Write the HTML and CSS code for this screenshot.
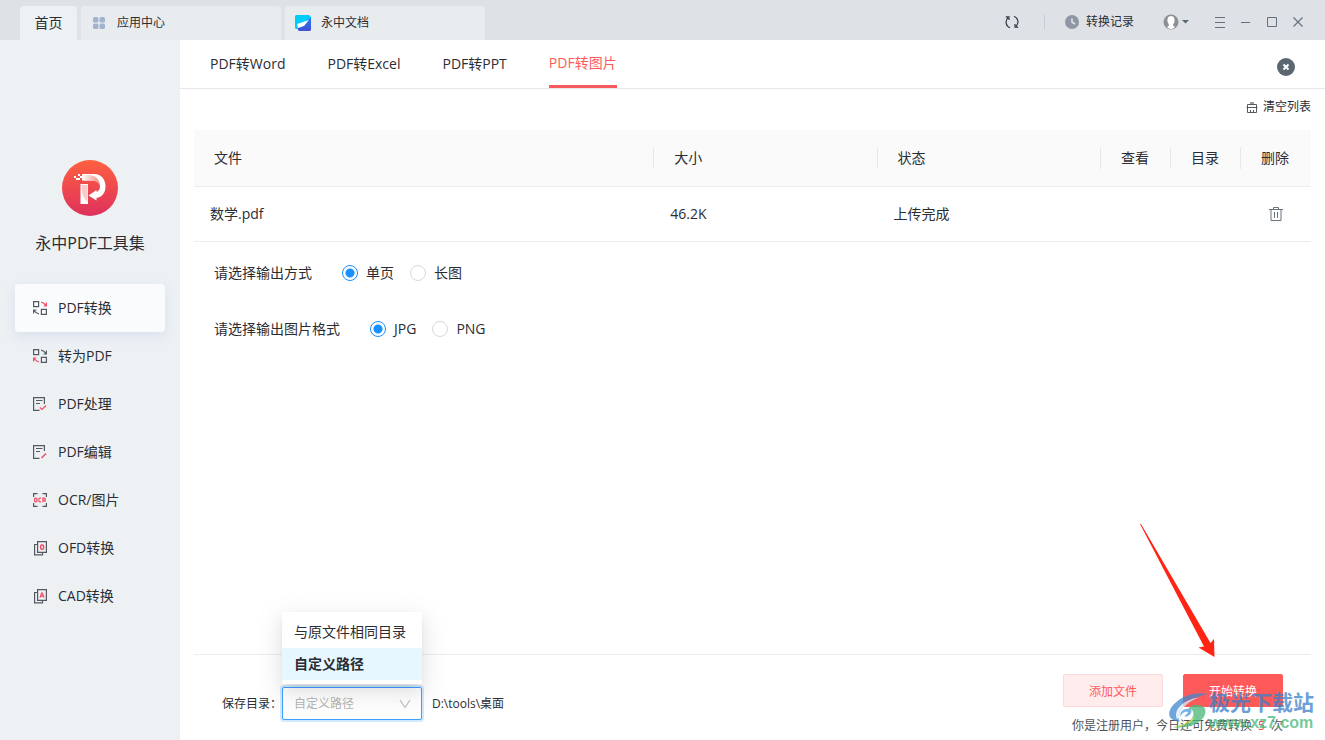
FILE: index.html
```html
<!DOCTYPE html>
<html lang="zh-CN">
<head>
<meta charset="utf-8">
<title>永中PDF工具集</title>
<link rel="stylesheet" href="styles.css">
</head>
<body>
<div class="app">
  <header class="topbar">
    <nav class="tabs">
      <button class="tab tab-home" type="button">首页</button>
      <button class="tab" type="button">
        <svg class="tab-icon" width="16" height="16" viewBox="0 0 16 16" fill="#a3b3ce"><rect x="2" y="2" width="5.500" height="5.500" rx="1.500"/><rect x="8.500" y="2" width="5.500" height="5.500" rx="1.500"/><rect x="2" y="8.500" width="5.500" height="5.500" rx="1.500"/><rect x="8.500" y="8.500" width="5.500" height="5.500" rx="1.500"/></svg>
        应用中心
      </button>
      <button class="tab" type="button">
        <svg class="tab-icon" width="16" height="16" viewBox="0 0 16 16"><defs><linearGradient id="doc" x1="0" y1="0" x2="0" y2="1"><stop offset="0" stop-color="#2878f0"/><stop offset="1" stop-color="#4050d8"/></linearGradient></defs><path d="M1 0H14L16 2V9H3V14H1L0 13V1Z" fill="#00ccfc"/><path d="M3 13L14 4L16 3V15L15 16H4L3 15Z" fill="url(#doc)"/><path d="M2 9L14 5L9 11L3 13Z" fill="#fff"/></svg>
        永中文档
      </button>
    </nav>
    <div class="tools">
      <button class="icon-btn" type="button" aria-label="刷新"><svg width="14" height="14" viewBox="0 0 14 14" fill="none" stroke="#343a42" stroke-width="1.200"><path d="M5 12.800A6 6 0 0 1 3 2.800M.800 1.800H4V5M9 1.200A6 6 0 0 1 11 11.200M13.200 12.200H10V9"/></svg></button>
      <span class="divider"></span>
      <button class="history" type="button"><svg width="14" height="14" viewBox="0 0 14 14"><circle cx="7" cy="7" r="7" fill="#8f97a4"/><path d="M7 3.500V7.200L10 9" fill="none" stroke="#e6e9ed" stroke-width="1.500"/></svg>转换记录</button>
      <button class="account" type="button" aria-label="账户"><svg width="26" height="16" viewBox="0 0 26 16"><circle cx="8" cy="8" r="7.500" fill="#8d9094"/><path d="M8 2C4.800 2 4.200 5 4.500 7.500C4.800 9.200 6 10 6 11.500L4 13C6 15.500 10 15.500 12 13L10 11.500C10 10 11.200 9.200 11.500 7.500C11.800 5 11.200 2 8 2Z" fill="#fff"/><path d="M19 6H26L22.500 9.500Z" fill="#5a6874"/></svg></button>
      <div class="window-controls">
        <button class="icon-btn" type="button" aria-label="菜单"><svg width="12" height="12" viewBox="0 0 12 12" stroke="#66717e"><path d="M1 1.500H11M1 6.500H11M1 11.500H11"/></svg></button>
        <button class="icon-btn" type="button" aria-label="最小化"><svg width="12" height="12" viewBox="0 0 12 12" stroke="#66717e"><path d="M1 6.500H10"/></svg></button>
        <button class="icon-btn" type="button" aria-label="最大化"><svg width="12" height="12" viewBox="0 0 12 12" fill="none" stroke="#66717e"><path d="M1.500 1.500H10.500V10.500H1.500Z"/></svg></button>
        <button class="icon-btn" type="button" aria-label="关闭"><svg width="12" height="12" viewBox="0 0 12 12" stroke="#66717e" stroke-width="1.200"><path d="M1.500 1.500L10.500 10.500M10.500 1.500L1.500 10.500"/></svg></button>
      </div>
    </div>
  </header>

  <div class="body">
    <aside class="sidebar">
      <svg class="brand-logo" width="56" height="56" viewBox="0 0 56 56"><defs><linearGradient id="lg" x1="0" y1="0" x2="0" y2="1"><stop offset="0" stop-color="#ff6040"/><stop offset="1" stop-color="#de315c"/></linearGradient><linearGradient id="ribbon" x1="0" y1="0" x2="1" y2="0"><stop offset="0" stop-color="#fff"/><stop offset="1" stop-color="#f58a7c"/></linearGradient></defs><circle cx="28" cy="28" r="28" fill="url(#lg)"/><path d="M20 14H32C40 14 43.500 20 43.500 26.500C43.500 33 40 37 34.500 38V40.500L26.500 35.500L34.500 30V32C37 31 38 29 38 26.500C38 23 35 20.500 31 20.500H20Z" fill="#fff"/><path d="M20 15H27C33 15.500 38 19 38 26C36 22 33 20.500 30 20.500H22Z" fill="url(#ribbon)"/><path d="M18.500 24H26V44H18.500Z" fill="#fff"/><path d="M19.500 25V30C20 35 22 39 25.500 42V25Z" fill="#f3a3a0" opacity=".55"/><path d="M12 16H14V18H12ZM14 18H16V20H14ZM16 14H18V16H16ZM18 16H20V18H18ZM16 18H18V20H16ZM20 14H22V16H20ZM20 18H22V20H20Z" fill="#fff"/></svg>
      <h1 class="brand-name">永中PDF工具集</h1>
      <nav class="menu">
        <a class="menu-item is-active" href="#"><svg width="16" height="16" viewBox="0 0 16 16" fill="none" stroke="#555a62" stroke-width="1.200"><path d="M1.600 1.600H6.600V6.600H1.600ZM9.400 9.400H14.400V14.400H9.400Z"/><path d="M9 2C11 2.500 12.500 3.500 14 5.500M14.400 2.500V6H11.500" stroke="#f24b62"/><path d="M7 14C5 13.500 3.500 12.500 2 10.500M1.600 13.500V10H4.500"/></svg>PDF转换</a>
        <a class="menu-item" href="#"><svg width="16" height="16" viewBox="0 0 16 16" fill="none" stroke="#555a62" stroke-width="1.200"><path d="M1.600 1.600H6.600V6.600H1.600ZM9.400 9.400H14.400V14.400H9.400Z"/><path d="M9 2C11 2.500 12.500 3.500 14 5.500M14.400 2.500V6H11.500"/><path d="M7 14C5 13.500 3.500 12.500 2 10.500M1.600 13.500V10H4.500" stroke="#f24b62"/></svg>转为PDF</a>
        <a class="menu-item" href="#"><svg width="16" height="16" viewBox="0 0 16 16" fill="none" stroke="#555a62" stroke-width="1.200"><path d="M7.500 14.400H1.600V1.600H12.400V8M4 4.500H10.500M4 7.500H8"/><path d="M7.800 11.500L10 13.500L14 9.500" stroke="#f24b62"/></svg>PDF处理</a>
        <a class="menu-item" href="#"><svg width="16" height="16" viewBox="0 0 16 16" fill="none" stroke="#555a62" stroke-width="1.200"><path d="M7.500 14.400H1.600V1.600H12.400V7M4 4.500H10.500M4 7.500H8"/><path d="M9.500 14L14 9.500" stroke="#f24b62" stroke-width="1.500"/></svg>PDF编辑</a>
        <a class="menu-item" href="#"><svg width="16" height="16" viewBox="0 0 16 16" fill="none" stroke="#555a62" stroke-width="1.200"><path d="M1.600 5V1.600H5.500M10.500 1.600H14.400V5M1.600 11V14.400H5.500M10.500 14.400H14.400V11"/><g stroke="#f24b62"><rect x="2.600" y="6.200" width="2.400" height="3.600" rx="1"/><path d="M9 6.200H7.800Q6.800 6.200 6.800 8T7.800 9.800H9M10.900 10.200V6.200H12.400Q13.500 6.200 13.300 7.400T12.300 8.400H11M12.300 8.400L13.500 10"/></g></svg>OCR/图片</a>
        <a class="menu-item" href="#"><svg width="16" height="16" viewBox="0 0 16 16" fill="none" stroke="#555a62" stroke-width="1.200"><path d="M5.600 1.600H14.400V12.400H5.600ZM5 4.500H2.600V14.900H10.500V13"/><rect x="8.600" y="5" width="3" height="4.200" rx="1.200" stroke="#f24b62" stroke-width="1.400"/></svg>OFD转换</a>
        <a class="menu-item" href="#"><svg width="16" height="16" viewBox="0 0 16 16" fill="none" stroke="#555a62" stroke-width="1.200"><path d="M5.600 1.600H14.400V12.400H5.600ZM5 4.500H2.600V14.900H10.500V13"/><path d="M8 9.500L9.600 5H10.400L12 9.500M8.600 8.200H11.400" stroke="#f24b62"/></svg>CAD转换</a>
      </nav>
    </aside>

    <main class="main">
      <div class="mode-bar">
        <nav class="modes">
          <a class="mode" href="#">PDF转Word</a>
          <a class="mode" href="#">PDF转Excel</a>
          <a class="mode" href="#">PDF转PPT</a>
          <a class="mode is-active" href="#">PDF转图片</a>
        </nav>
        <button class="icon-btn" type="button" aria-label="关闭"><svg width="18" height="18" viewBox="0 0 18 18"><circle cx="9" cy="9" r="9" fill="#5b6670"/><path d="M6.500 6.500L11.500 11.500M11.500 6.500L6.500 11.500" stroke="#fff" stroke-width="2"/></svg></button>
      </div>

      <div class="content">
        <div class="list-actions">
          <button class="clear" type="button"><svg width="12" height="12" viewBox="0 0 12 12" fill="none" stroke="#555a62"><path d="M4.500 3.500V1.500H7.500V3.500" fill="#999" stroke="#999"/><path d="M1.500 6.500V3.500H10.500V6.500M.5 6.500H11.500M1.500 6.500V11.500H10.500V6.500M4.500 11.500V9M7.500 11.500V9"/></svg>清空列表</button>
        </div>
        <table class="files">
          <colgroup><col><col class="col-wide"><col class="col-wide"><col class="col-action"><col class="col-action"><col class="col-action"></colgroup>
          <thead>
            <tr><th>文件</th><th>大小</th><th>状态</th><th>查看</th><th>目录</th><th>删除</th></tr>
          </thead>
          <tbody>
            <tr><td>数学.pdf</td><td>46.2K</td><td>上传完成</td><td></td><td></td><td class="cell-delete"><button class="icon-btn" type="button" aria-label="删除"><svg width="16" height="16" viewBox="0 0 16 16" fill="none" stroke="#69737d"><path d="M1 3.500H15M5.500 3.500V1.500H10.500V3.500M3 3.500V14.500H13V3.500M6.500 6V12M9.500 6V12"/></svg></button></td></tr>
          </tbody>
        </table>

        <div class="options">
          <div class="option-row" role="radiogroup" aria-labelledby="layout-label">
            <span class="option-label" id="layout-label">请选择输出方式</span>
            <label class="radio"><input type="radio" name="layout" checked>单页</label>
            <label class="radio"><input type="radio" name="layout">长图</label>
          </div>
          <div class="option-row" role="radiogroup" aria-labelledby="format-label">
            <span class="option-label" id="format-label">请选择输出图片格式</span>
            <label class="radio"><input type="radio" name="format" checked>JPG</label>
            <label class="radio"><input type="radio" name="format">PNG</label>
          </div>
        </div>

        <footer class="footer">
          <div class="save">
            <label for="save-dir">保存目录：</label>
            <div class="select-wrap">
              <select class="select" id="save-dir"><option>自定义路径</option><option>与原文件相同目录</option></select>
              <svg class="select-arrow" width="12" height="12" viewBox="0 0 12 12" fill="none" stroke="#bfbfbf" stroke-width="1.200"><path d="M1 2L6 9.500L11 2"/></svg>
              <ul class="dropdown" role="listbox" aria-label="保存目录">
                <li class="dropdown-item" role="option" aria-selected="false">与原文件相同目录</li>
                <li class="dropdown-item is-selected" role="option" aria-selected="true">自定义路径</li>
              </ul>
            </div>
            <span class="path">D:\tools\桌面</span>
          </div>
          <div class="submit">
            <div class="buttons">
              <button class="btn" type="button">添加文件</button>
              <button class="btn btn-primary" type="button">开始转换</button>
            </div>
            <p class="quota">你是注册用户，今日还可免费转换 <span class="count">5</span> 次</p>
          </div>
          <svg class="pointer" width="80" height="136" viewBox="0 0 80 136"><path d="M4 2L5 2L74.500 121L78 117L78.500 135L62.500 125.500L68 124.500Z" fill="#ff2414"/></svg>
          <div class="watermark">
            <svg width="42" height="38" viewBox="0 0 44 42"><path d="M44 2C28-1 10 6 3 18C-2 27 4 32 13 33C8 25 14 10 44 2Z" fill="#3f87cf"/><path d="M10 30C5 20 17 8 34 6C23 10 14 18 14 25Z" fill="#d8ecf8"/><path d="M26 15C37 12 43 17 41 24C38 34 24 41 5 39C19 37 28 31 28 24C28 20 25 18 22 19Z" fill="#48b878"/><path d="M5 39C20 38 29 32 29 27C24 33 16 36 5 39Z" fill="#c4d848"/><path d="M14 28C12 21 19 17 25 19C28 22 23 28 18 27C19 25 22 24 22 22C18 21 14 24 14 28Z" fill="#4b9cda"/></svg>
            <div class="watermark-text"><span class="watermark-name">极光下载站</span><span class="watermark-url">www.xz7.com</span></div>
          </div>
        </footer>
      </div>
    </main>
  </div>
</div>
</body>
</html>
```
FILE: styles.css
```css
* { box-sizing: border-box; }

body {
  margin: 0;
  font: 14px/20px "Open Sans", "Noto Sans CJK SC", sans-serif;
  font-weight: 400;
  color: #2b2d33;
  background: #fff;
}

button {
  margin: 0;
  padding: 0;
  border: 0;
  background: none;
  font: inherit;
  color: inherit;
}

a { color: inherit; text-decoration: none; }
svg { display: block; flex: none; }

.app { min-height: 100vh; display: flex; flex-direction: column; }

.topbar {
  height: 40px;
  display: flex;
  justify-content: space-between;
  padding: 0 21px 0 20px;
  background: #dee1e6;
}
.tabs { display: flex; align-items: flex-end; gap: 4px; }
.tab {
  width: 200px;
  height: 34px;
  display: flex;
  align-items: center;
  gap: 10px;
  padding: 0 10px;
  border-radius: 4px 4px 0 0;
  background: #e8ecef;
  font-size: 12px;
}
.tab-home { width: 57px; justify-content: center; background: #edf1f4; font-size: 14px; }

.tools { display: flex; align-items: center; padding-top: 4px; }
.icon-btn { display: flex; align-items: center; justify-content: center; }
.divider { width: 1px; height: 14px; margin: 0 20px 0 25px; background: #c9cdd3; }
.history { display: flex; align-items: center; gap: 7px; font-size: 12px; }
.account { margin: 0 25px 0 29px; }
.window-controls { display: flex; gap: 14px; }

.body { flex: 1; display: flex; }
.sidebar {
  flex: none;
  width: 180px;
  padding: 120px 15px 0;
  background: #edf1f4;
}
.brand-logo { margin: 0 auto; }
.brand-name {
  margin: 15px 0 29px;
  font-size: 16px;
  line-height: 24px;
  font-weight: 400;
  text-align: center;
}
.menu { display: flex; flex-direction: column; }
.menu-item {
  height: 48px;
  display: flex;
  align-items: center;
  gap: 10px;
  padding-left: 17px;
  border-radius: 4px;
}
.menu-item.is-active { background: #fafbfd; box-shadow: 0 4px 12px rgba(120, 140, 200, .16); }

.main { flex: 1; min-width: 0; display: flex; flex-direction: column; }
.mode-bar {
  height: 49px;
  display: flex;
  justify-content: space-between;
  padding: 0 30px;
  border-bottom: 1px solid #e8e8ec;
}
.mode-bar .icon-btn { padding-top: 6px; }
.modes { display: flex; gap: 42px; }
.mode { height: 48px; line-height: 48px; }
.mode.is-active { line-height: 46px; color: #ff5a5a; border-bottom: 3px solid #f95a5e; }

.content { flex: 1; display: flex; flex-direction: column; padding: 0 14px; }
.list-actions { display: flex; justify-content: flex-end; padding: 8px 0 13px; }
.clear { display: flex; align-items: center; gap: 5px; font-size: 12px; }

.files { width: 100%; table-layout: fixed; border-collapse: collapse; }
.col-wide { width: 20%; }
.col-action { width: 70px; }
.files th {
  height: 56px;
  padding: 0 20px;
  background:
    linear-gradient(#e8e8e8, #e8e8e8) right center / 1px 22px no-repeat,
    #fafafa;
  border-bottom: 1px solid #ececec;
  font-weight: 400;
  text-align: left;
}
.files th:last-child { background: #fafafa; }
.files td { height: 55px; padding: 0 16px; border-bottom: 1px solid #ececec; }
.files .cell-delete { padding: 0; }
.cell-delete .icon-btn { margin: 0 auto; }

.options { flex: 1; padding: 3px 20px 0; }
.option-row { height: 56px; display: flex; align-items: center; gap: 16px; }
.option-label { margin-right: 14px; }
.radio { display: flex; align-items: center; gap: 8px; }
.radio input {
  appearance: none;
  width: 16px;
  height: 16px;
  margin: 0;
  border: 1px solid #d9d9d9;
  border-radius: 50%;
  background: #fff;
}
.radio input:checked {
  border-color: #1890ff;
  background: radial-gradient(circle, #1890ff 4px, transparent 5px);
}

.footer {
  position: relative;
  height: 86px;
  display: flex;
  justify-content: space-between;
  align-items: flex-start;
  padding: 19px 28px 0;
  border-top: 1px solid #ececec;
}
.save { display: flex; align-items: center; padding-top: 13px; font-size: 12px; }
.save label { width: 60px; white-space: nowrap; }
.select-wrap { position: relative; width: 140px; }
.select {
  appearance: none;
  display: block;
  width: 100%;
  height: 33px;
  padding: 0 11px;
  border: 1px solid #40a0ff;
  border-radius: 2px;
  background: #fff;
  box-shadow: 0 0 0 2px rgba(24, 144, 255, .2);
  font: inherit;
  color: #b5b5b5;
}
.select-arrow { position: absolute; right: 11px; top: 11px; }
.dropdown {
  position: absolute;
  left: 0;
  bottom: 36px;
  width: 100%;
  margin: 0;
  padding: 4px 0;
  border-radius: 2px;
  background: #fff;
  box-shadow: 0 3px 6px -4px rgba(0, 0, 0, .12), 0 6px 16px rgba(0, 0, 0, .08), 0 9px 28px 8px rgba(0, 0, 0, .05);
  list-style: none;
  font-size: 14px;
}
.dropdown-item { height: 32px; padding: 0 12px; line-height: 32px; white-space: nowrap; }
.dropdown-item.is-selected { background: #e6f7ff; font-weight: 600; }
.path { margin-left: 10px; }

.buttons { display: flex; gap: 20px; }
.btn {
  width: 100px;
  height: 33px;
  padding-top: 2px;
  border: 1px solid #ffd9d9;
  border-radius: 2px;
  background: #ffeded;
  color: #ff5a5a;
  font-size: 12px;
}
.btn-primary { border-color: #ff5a5a; background: #ff5a5a; color: #fff; }
.quota { margin: 9px 0 0; font-size: 12px; text-align: right; color: #505256; white-space: nowrap; }
.count { margin: 0 3px; color: #f5484c; }

.pointer { position: absolute; right: 95px; bottom: 82px; }
.watermark {
  position: absolute;
  right: -3px;
  bottom: 8px;
  display: flex;
  align-items: center;
  opacity: .75;
  pointer-events: none;
}
.watermark-text { display: flex; flex-direction: column; font-weight: 700; white-space: nowrap; }
.watermark-name { font-size: 21px; line-height: 24px; color: #3b7fc8; }
.watermark-url { font-family: "Liberation Sans", sans-serif; font-size: 16px; line-height: 18px; color: #49b877; }
```
